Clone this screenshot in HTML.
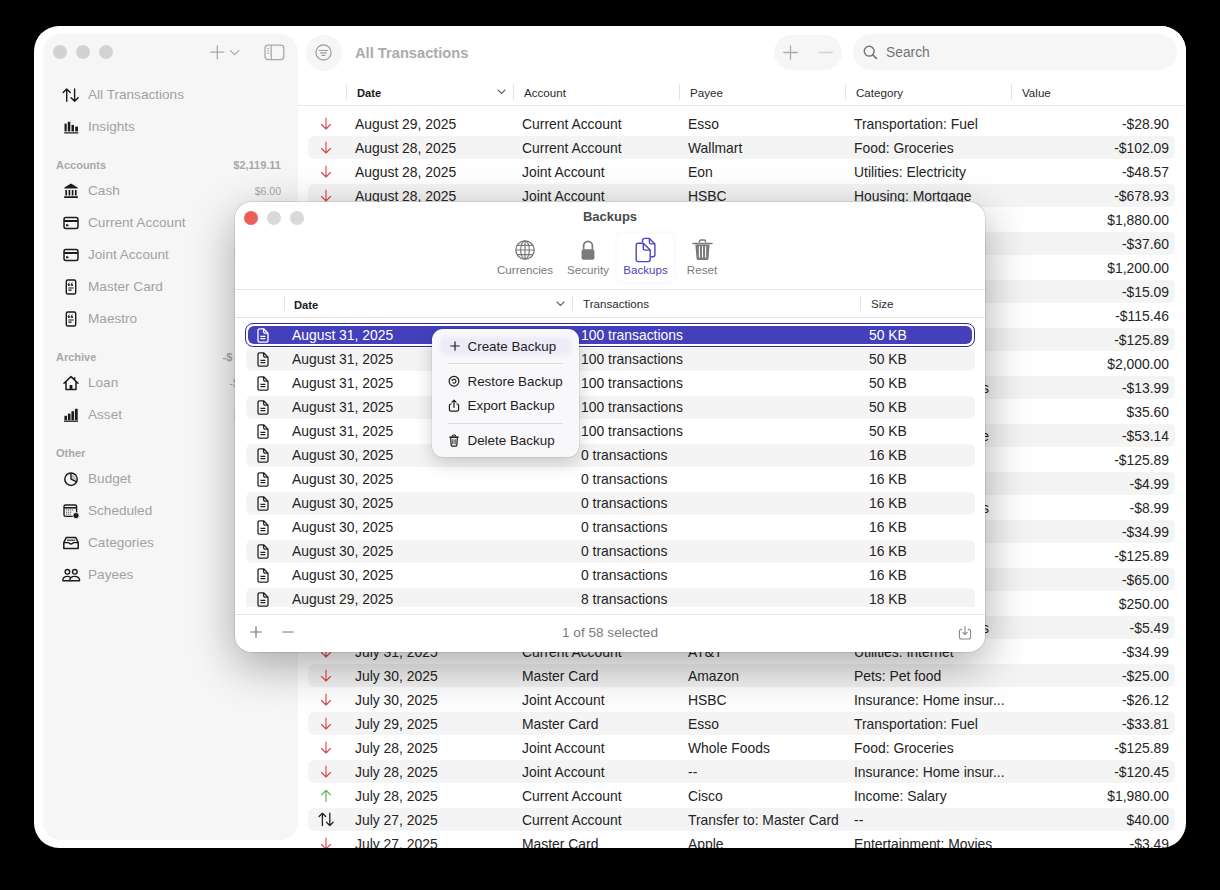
<!DOCTYPE html>
<html><head><meta charset="utf-8"><style>
*{margin:0;padding:0;box-sizing:border-box}
html,body{width:1220px;height:890px;background:#000;overflow:hidden}
body{position:relative;font-family:"Liberation Sans",sans-serif;color:#222}
.abs{position:absolute}
.ic{position:absolute;overflow:visible}
#win{position:absolute;left:34px;top:26px;width:1152px;height:822px;background:#fff;border-radius:25px;overflow:hidden}
#side{position:absolute;left:9px;top:8px;width:255px;height:806px;background:#f6f6f6;border-radius:18px}
.t{position:absolute;white-space:nowrap;line-height:20px;height:20px}
.row{position:absolute;left:274px;width:867px;height:24px;border-radius:6px}
.row.g::before{content:"";position:absolute;left:0;right:0;top:0.5px;bottom:0.5px;background:#f4f4f4;border-radius:6px}
.cell{position:absolute;top:0;line-height:24px;font-size:13.9px;color:#242424;white-space:nowrap;padding-top:0.5px}
.hdr{position:absolute;top:0;line-height:20px;font-size:11.6px;padding-top:1px;color:#2a2a2a;white-space:nowrap}
.vdiv{position:absolute;width:1px;background:#e3e3e3}
.light{position:absolute;width:14px;height:14px;border-radius:50%;background:#d2d2d2}
</style></head><body>
<div id="win">

<div class="row" style="top:85px">
<div class="cell" style="left:47px">August 29, 2025</div>
<div class="cell" style="left:214px">Current Account</div>
<div class="cell" style="left:380px">Esso</div>
<div class="cell" style="left:546px">Transportation: Fuel</div>
<div class="cell" style="right:6px;text-align:right">-$28.90</div>
<svg class="ic" style="left:11px;top:4px" width="14" height="16" viewBox="0 0 14 16"><path d="M7 3.1V14.1M2.5 9.5L7 14L11.5 9.5" fill="none" stroke="#d5504f" stroke-width="1.15" stroke-linecap="round" stroke-linejoin="round"/></svg>
</div>
<div class="row g" style="top:109px">
<div class="cell" style="left:47px">August 28, 2025</div>
<div class="cell" style="left:214px">Current Account</div>
<div class="cell" style="left:380px">Wallmart</div>
<div class="cell" style="left:546px">Food: Groceries</div>
<div class="cell" style="right:6px;text-align:right">-$102.09</div>
<svg class="ic" style="left:11px;top:4px" width="14" height="16" viewBox="0 0 14 16"><path d="M7 3.1V14.1M2.5 9.5L7 14L11.5 9.5" fill="none" stroke="#d5504f" stroke-width="1.15" stroke-linecap="round" stroke-linejoin="round"/></svg>
</div>
<div class="row" style="top:133px">
<div class="cell" style="left:47px">August 28, 2025</div>
<div class="cell" style="left:214px">Joint Account</div>
<div class="cell" style="left:380px">Eon</div>
<div class="cell" style="left:546px">Utilities: Electricity</div>
<div class="cell" style="right:6px;text-align:right">-$48.57</div>
<svg class="ic" style="left:11px;top:4px" width="14" height="16" viewBox="0 0 14 16"><path d="M7 3.1V14.1M2.5 9.5L7 14L11.5 9.5" fill="none" stroke="#d5504f" stroke-width="1.15" stroke-linecap="round" stroke-linejoin="round"/></svg>
</div>
<div class="row g" style="top:157px">
<div class="cell" style="left:47px">August 28, 2025</div>
<div class="cell" style="left:214px">Joint Account</div>
<div class="cell" style="left:380px">HSBC</div>
<div class="cell" style="left:546px">Housing: Mortgage</div>
<div class="cell" style="right:6px;text-align:right">-$678.93</div>
<svg class="ic" style="left:11px;top:4px" width="14" height="16" viewBox="0 0 14 16"><path d="M7 3.1V14.1M2.5 9.5L7 14L11.5 9.5" fill="none" stroke="#d5504f" stroke-width="1.15" stroke-linecap="round" stroke-linejoin="round"/></svg>
</div>
<div class="row" style="top:181px">
<div class="cell" style="left:47px">August 27, 2025</div>
<div class="cell" style="left:214px">Current Account</div>
<div class="cell" style="left:380px">Cisco</div>
<div class="cell" style="left:546px">Income: Salary</div>
<div class="cell" style="right:6px;text-align:right">$1,880.00</div>
<svg class="ic" style="left:11px;top:4px" width="14" height="16" viewBox="0 0 14 16"><path d="M7 14.4V3.4M2.5 7.9L7 3.4L11.5 7.9" fill="none" stroke="#4fb35a" stroke-width="1.15" stroke-linecap="round" stroke-linejoin="round"/></svg>
</div>
<div class="row g" style="top:205px">
<div class="cell" style="left:47px">August 26, 2025</div>
<div class="cell" style="left:214px">Master Card</div>
<div class="cell" style="left:380px">Esso</div>
<div class="cell" style="left:546px">Transportation: Fuel</div>
<div class="cell" style="right:6px;text-align:right">-$37.60</div>
<svg class="ic" style="left:11px;top:4px" width="14" height="16" viewBox="0 0 14 16"><path d="M7 3.1V14.1M2.5 9.5L7 14L11.5 9.5" fill="none" stroke="#d5504f" stroke-width="1.15" stroke-linecap="round" stroke-linejoin="round"/></svg>
</div>
<div class="row" style="top:229px">
<div class="cell" style="left:47px">August 25, 2025</div>
<div class="cell" style="left:214px">Joint Account</div>
<div class="cell" style="left:380px">Cisco</div>
<div class="cell" style="left:546px">Income: Salary</div>
<div class="cell" style="right:6px;text-align:right">$1,200.00</div>
<svg class="ic" style="left:11px;top:4px" width="14" height="16" viewBox="0 0 14 16"><path d="M7 14.4V3.4M2.5 7.9L7 3.4L11.5 7.9" fill="none" stroke="#4fb35a" stroke-width="1.15" stroke-linecap="round" stroke-linejoin="round"/></svg>
</div>
<div class="row g" style="top:253px">
<div class="cell" style="left:47px">August 24, 2025</div>
<div class="cell" style="left:214px">Master Card</div>
<div class="cell" style="left:380px">Apple</div>
<div class="cell" style="left:546px">Entertainment</div>
<div class="cell" style="right:6px;text-align:right">-$15.09</div>
<svg class="ic" style="left:11px;top:4px" width="14" height="16" viewBox="0 0 14 16"><path d="M7 3.1V14.1M2.5 9.5L7 14L11.5 9.5" fill="none" stroke="#d5504f" stroke-width="1.15" stroke-linecap="round" stroke-linejoin="round"/></svg>
</div>
<div class="row" style="top:277px">
<div class="cell" style="left:47px">August 22, 2025</div>
<div class="cell" style="left:214px">Joint Account</div>
<div class="cell" style="left:380px">Whole Foods</div>
<div class="cell" style="left:546px">Food: Groceries</div>
<div class="cell" style="right:6px;text-align:right">-$115.46</div>
<svg class="ic" style="left:11px;top:4px" width="14" height="16" viewBox="0 0 14 16"><path d="M7 3.1V14.1M2.5 9.5L7 14L11.5 9.5" fill="none" stroke="#d5504f" stroke-width="1.15" stroke-linecap="round" stroke-linejoin="round"/></svg>
</div>
<div class="row g" style="top:301px">
<div class="cell" style="left:47px">August 20, 2025</div>
<div class="cell" style="left:214px">Joint Account</div>
<div class="cell" style="left:380px">Wallmart</div>
<div class="cell" style="left:546px">Food: Groceries</div>
<div class="cell" style="right:6px;text-align:right">-$125.89</div>
<svg class="ic" style="left:11px;top:4px" width="14" height="16" viewBox="0 0 14 16"><path d="M7 3.1V14.1M2.5 9.5L7 14L11.5 9.5" fill="none" stroke="#d5504f" stroke-width="1.15" stroke-linecap="round" stroke-linejoin="round"/></svg>
</div>
<div class="row" style="top:325px">
<div class="cell" style="left:47px">August 18, 2025</div>
<div class="cell" style="left:214px">Current Account</div>
<div class="cell" style="left:380px">Cisco</div>
<div class="cell" style="left:546px">Income: Salary</div>
<div class="cell" style="right:6px;text-align:right">$2,000.00</div>
<svg class="ic" style="left:11px;top:4px" width="14" height="16" viewBox="0 0 14 16"><path d="M7 14.4V3.4M2.5 7.9L7 3.4L11.5 7.9" fill="none" stroke="#4fb35a" stroke-width="1.15" stroke-linecap="round" stroke-linejoin="round"/></svg>
</div>
<div class="row g" style="top:349px">
<div class="cell" style="left:47px">August 15, 2025</div>
<div class="cell" style="left:214px">Master Card</div>
<div class="cell" style="left:380px">Netflix</div>
<div class="cell" style="right:186px;text-align:right">Entertainment: Games</div>
<div class="cell" style="right:6px;text-align:right">-$13.99</div>
<svg class="ic" style="left:11px;top:4px" width="14" height="16" viewBox="0 0 14 16"><path d="M7 3.1V14.1M2.5 9.5L7 14L11.5 9.5" fill="none" stroke="#d5504f" stroke-width="1.15" stroke-linecap="round" stroke-linejoin="round"/></svg>
</div>
<div class="row" style="top:373px">
<div class="cell" style="left:47px">August 14, 2025</div>
<div class="cell" style="left:214px">Current Account</div>
<div class="cell" style="left:380px">Refund</div>
<div class="cell" style="left:546px">Income: Refunds</div>
<div class="cell" style="right:6px;text-align:right">$35.60</div>
<svg class="ic" style="left:11px;top:4px" width="14" height="16" viewBox="0 0 14 16"><path d="M7 14.4V3.4M2.5 7.9L7 3.4L11.5 7.9" fill="none" stroke="#4fb35a" stroke-width="1.15" stroke-linecap="round" stroke-linejoin="round"/></svg>
</div>
<div class="row g" style="top:397px">
<div class="cell" style="left:47px">August 12, 2025</div>
<div class="cell" style="left:214px">Joint Account</div>
<div class="cell" style="left:380px">Vodafone</div>
<div class="cell" style="right:186px;text-align:right">Utilities: Mobile phone</div>
<div class="cell" style="right:6px;text-align:right">-$53.14</div>
<svg class="ic" style="left:11px;top:4px" width="14" height="16" viewBox="0 0 14 16"><path d="M7 3.1V14.1M2.5 9.5L7 14L11.5 9.5" fill="none" stroke="#d5504f" stroke-width="1.15" stroke-linecap="round" stroke-linejoin="round"/></svg>
</div>
<div class="row" style="top:421px">
<div class="cell" style="left:47px">August 10, 2025</div>
<div class="cell" style="left:214px">Joint Account</div>
<div class="cell" style="left:380px">Whole Foods</div>
<div class="cell" style="left:546px">Food: Groceries</div>
<div class="cell" style="right:6px;text-align:right">-$125.89</div>
<svg class="ic" style="left:11px;top:4px" width="14" height="16" viewBox="0 0 14 16"><path d="M7 3.1V14.1M2.5 9.5L7 14L11.5 9.5" fill="none" stroke="#d5504f" stroke-width="1.15" stroke-linecap="round" stroke-linejoin="round"/></svg>
</div>
<div class="row g" style="top:445px">
<div class="cell" style="left:47px">August 9, 2025</div>
<div class="cell" style="left:214px">Master Card</div>
<div class="cell" style="left:380px">Spotify</div>
<div class="cell" style="left:546px">Entertainment: Music</div>
<div class="cell" style="right:6px;text-align:right">-$4.99</div>
<svg class="ic" style="left:11px;top:4px" width="14" height="16" viewBox="0 0 14 16"><path d="M7 3.1V14.1M2.5 9.5L7 14L11.5 9.5" fill="none" stroke="#d5504f" stroke-width="1.15" stroke-linecap="round" stroke-linejoin="round"/></svg>
</div>
<div class="row" style="top:469px">
<div class="cell" style="left:47px">August 8, 2025</div>
<div class="cell" style="left:214px">Master Card</div>
<div class="cell" style="left:380px">Apple</div>
<div class="cell" style="right:186px;text-align:right">Entertainment: Games</div>
<div class="cell" style="right:6px;text-align:right">-$8.99</div>
<svg class="ic" style="left:11px;top:4px" width="14" height="16" viewBox="0 0 14 16"><path d="M7 3.1V14.1M2.5 9.5L7 14L11.5 9.5" fill="none" stroke="#d5504f" stroke-width="1.15" stroke-linecap="round" stroke-linejoin="round"/></svg>
</div>
<div class="row g" style="top:493px">
<div class="cell" style="left:47px">August 6, 2025</div>
<div class="cell" style="left:214px">Current Account</div>
<div class="cell" style="left:380px">AT&amp;T</div>
<div class="cell" style="left:546px">Utilities: Internet</div>
<div class="cell" style="right:6px;text-align:right">-$34.99</div>
<svg class="ic" style="left:11px;top:4px" width="14" height="16" viewBox="0 0 14 16"><path d="M7 3.1V14.1M2.5 9.5L7 14L11.5 9.5" fill="none" stroke="#d5504f" stroke-width="1.15" stroke-linecap="round" stroke-linejoin="round"/></svg>
</div>
<div class="row" style="top:517px">
<div class="cell" style="left:47px">August 4, 2025</div>
<div class="cell" style="left:214px">Joint Account</div>
<div class="cell" style="left:380px">Wallmart</div>
<div class="cell" style="left:546px">Food: Groceries</div>
<div class="cell" style="right:6px;text-align:right">-$125.89</div>
<svg class="ic" style="left:11px;top:4px" width="14" height="16" viewBox="0 0 14 16"><path d="M7 3.1V14.1M2.5 9.5L7 14L11.5 9.5" fill="none" stroke="#d5504f" stroke-width="1.15" stroke-linecap="round" stroke-linejoin="round"/></svg>
</div>
<div class="row g" style="top:541px">
<div class="cell" style="left:47px">August 3, 2025</div>
<div class="cell" style="left:214px">Master Card</div>
<div class="cell" style="left:380px">Esso</div>
<div class="cell" style="left:546px">Transportation: Fuel</div>
<div class="cell" style="right:6px;text-align:right">-$65.00</div>
<svg class="ic" style="left:11px;top:4px" width="14" height="16" viewBox="0 0 14 16"><path d="M7 3.1V14.1M2.5 9.5L7 14L11.5 9.5" fill="none" stroke="#d5504f" stroke-width="1.15" stroke-linecap="round" stroke-linejoin="round"/></svg>
</div>
<div class="row" style="top:565px">
<div class="cell" style="left:47px">August 2, 2025</div>
<div class="cell" style="left:214px">Current Account</div>
<div class="cell" style="left:380px">Cisco</div>
<div class="cell" style="left:546px">Income: Bonus</div>
<div class="cell" style="right:6px;text-align:right">$250.00</div>
<svg class="ic" style="left:11px;top:4px" width="14" height="16" viewBox="0 0 14 16"><path d="M7 14.4V3.4M2.5 7.9L7 3.4L11.5 7.9" fill="none" stroke="#4fb35a" stroke-width="1.15" stroke-linecap="round" stroke-linejoin="round"/></svg>
</div>
<div class="row g" style="top:589px">
<div class="cell" style="left:47px">August 1, 2025</div>
<div class="cell" style="left:214px">Master Card</div>
<div class="cell" style="left:380px">Apple</div>
<div class="cell" style="right:186px;text-align:right">Entertainment: Games</div>
<div class="cell" style="right:6px;text-align:right">-$5.49</div>
<svg class="ic" style="left:11px;top:4px" width="14" height="16" viewBox="0 0 14 16"><path d="M7 3.1V14.1M2.5 9.5L7 14L11.5 9.5" fill="none" stroke="#d5504f" stroke-width="1.15" stroke-linecap="round" stroke-linejoin="round"/></svg>
</div>
<div class="row" style="top:613px">
<div class="cell" style="left:47px">July 31, 2025</div>
<div class="cell" style="left:214px">Current Account</div>
<div class="cell" style="left:380px">AT&amp;T</div>
<div class="cell" style="left:546px">Utilities: Internet</div>
<div class="cell" style="right:6px;text-align:right">-$34.99</div>
<svg class="ic" style="left:11px;top:4px" width="14" height="16" viewBox="0 0 14 16"><path d="M7 3.1V14.1M2.5 9.5L7 14L11.5 9.5" fill="none" stroke="#d5504f" stroke-width="1.15" stroke-linecap="round" stroke-linejoin="round"/></svg>
</div>
<div class="row g" style="top:637px">
<div class="cell" style="left:47px">July 30, 2025</div>
<div class="cell" style="left:214px">Master Card</div>
<div class="cell" style="left:380px">Amazon</div>
<div class="cell" style="left:546px">Pets: Pet food</div>
<div class="cell" style="right:6px;text-align:right">-$25.00</div>
<svg class="ic" style="left:11px;top:4px" width="14" height="16" viewBox="0 0 14 16"><path d="M7 3.1V14.1M2.5 9.5L7 14L11.5 9.5" fill="none" stroke="#d5504f" stroke-width="1.15" stroke-linecap="round" stroke-linejoin="round"/></svg>
</div>
<div class="row" style="top:661px">
<div class="cell" style="left:47px">July 30, 2025</div>
<div class="cell" style="left:214px">Joint Account</div>
<div class="cell" style="left:380px">HSBC</div>
<div class="cell" style="left:546px">Insurance: Home insur...</div>
<div class="cell" style="right:6px;text-align:right">-$26.12</div>
<svg class="ic" style="left:11px;top:4px" width="14" height="16" viewBox="0 0 14 16"><path d="M7 3.1V14.1M2.5 9.5L7 14L11.5 9.5" fill="none" stroke="#d5504f" stroke-width="1.15" stroke-linecap="round" stroke-linejoin="round"/></svg>
</div>
<div class="row g" style="top:685px">
<div class="cell" style="left:47px">July 29, 2025</div>
<div class="cell" style="left:214px">Master Card</div>
<div class="cell" style="left:380px">Esso</div>
<div class="cell" style="left:546px">Transportation: Fuel</div>
<div class="cell" style="right:6px;text-align:right">-$33.81</div>
<svg class="ic" style="left:11px;top:4px" width="14" height="16" viewBox="0 0 14 16"><path d="M7 3.1V14.1M2.5 9.5L7 14L11.5 9.5" fill="none" stroke="#d5504f" stroke-width="1.15" stroke-linecap="round" stroke-linejoin="round"/></svg>
</div>
<div class="row" style="top:709px">
<div class="cell" style="left:47px">July 28, 2025</div>
<div class="cell" style="left:214px">Joint Account</div>
<div class="cell" style="left:380px">Whole Foods</div>
<div class="cell" style="left:546px">Food: Groceries</div>
<div class="cell" style="right:6px;text-align:right">-$125.89</div>
<svg class="ic" style="left:11px;top:4px" width="14" height="16" viewBox="0 0 14 16"><path d="M7 3.1V14.1M2.5 9.5L7 14L11.5 9.5" fill="none" stroke="#d5504f" stroke-width="1.15" stroke-linecap="round" stroke-linejoin="round"/></svg>
</div>
<div class="row g" style="top:733px">
<div class="cell" style="left:47px">July 28, 2025</div>
<div class="cell" style="left:214px">Joint Account</div>
<div class="cell" style="left:380px">--</div>
<div class="cell" style="left:546px">Insurance: Home insur...</div>
<div class="cell" style="right:6px;text-align:right">-$120.45</div>
<svg class="ic" style="left:11px;top:4px" width="14" height="16" viewBox="0 0 14 16"><path d="M7 3.1V14.1M2.5 9.5L7 14L11.5 9.5" fill="none" stroke="#d5504f" stroke-width="1.15" stroke-linecap="round" stroke-linejoin="round"/></svg>
</div>
<div class="row" style="top:757px">
<div class="cell" style="left:47px">July 28, 2025</div>
<div class="cell" style="left:214px">Current Account</div>
<div class="cell" style="left:380px">Cisco</div>
<div class="cell" style="left:546px">Income: Salary</div>
<div class="cell" style="right:6px;text-align:right">$1,980.00</div>
<svg class="ic" style="left:11px;top:4px" width="14" height="16" viewBox="0 0 14 16"><path d="M7 14.4V3.4M2.5 7.9L7 3.4L11.5 7.9" fill="none" stroke="#4fb35a" stroke-width="1.15" stroke-linecap="round" stroke-linejoin="round"/></svg>
</div>
<div class="row g" style="top:781px">
<div class="cell" style="left:47px">July 27, 2025</div>
<div class="cell" style="left:214px">Current Account</div>
<div class="cell" style="left:380px">Transfer to: Master Card</div>
<div class="cell" style="left:546px">--</div>
<div class="cell" style="right:6px;text-align:right">$40.00</div>
<svg class="ic" style="left:9px;top:4px" width="18" height="16" viewBox="0 0 18 16"><path d="M5.4 14.6V2.2M2.1 5.5L5.4 2.2L8.7 5.5M12.8 2.2V14.6M9.5 11.3L12.8 14.6L16.1 11.3" fill="none" stroke="#222" stroke-width="1.3" stroke-linecap="round" stroke-linejoin="round"/></svg>
</div>
<div class="row" style="top:805px">
<div class="cell" style="left:47px">July 27, 2025</div>
<div class="cell" style="left:214px">Master Card</div>
<div class="cell" style="left:380px">Apple</div>
<div class="cell" style="left:546px">Entertainment: Movies</div>
<div class="cell" style="right:6px;text-align:right">-$3.49</div>
<svg class="ic" style="left:11px;top:4px" width="14" height="16" viewBox="0 0 14 16"><path d="M7 3.1V14.1M2.5 9.5L7 14L11.5 9.5" fill="none" stroke="#d5504f" stroke-width="1.15" stroke-linecap="round" stroke-linejoin="round"/></svg>
</div>
<div class="abs" style="left:264px;top:54px;width:900px;height:26px;background:#fff"></div>
<div class="abs" style="left:264px;top:79px;width:900px;height:1px;background:#e6e6e6"></div>
<div class="vdiv" style="left:312px;top:58px;height:16px"></div>
<div class="vdiv" style="left:479px;top:58px;height:16px"></div>
<div class="vdiv" style="left:645px;top:58px;height:16px"></div>
<div class="vdiv" style="left:811px;top:58px;height:16px"></div>
<div class="vdiv" style="left:977px;top:58px;height:16px"></div>
<div class="hdr" style="left:323px;top:56px;font-weight:bold;font-size:11.2px;color:#1a1a1a">Date</div>
<svg class="ic" style="left:463px;top:63px" width="9" height="6" viewBox="0 0 9 6"><path d="M1 1L4.5 4.5L8 1" fill="none" stroke="#666" stroke-width="1.1" stroke-linecap="round" stroke-linejoin="round"/></svg>
<div class="hdr" style="left:490px;top:56px">Account</div>
<div class="hdr" style="left:656px;top:56px">Payee</div>
<div class="hdr" style="left:822px;top:56px">Category</div>
<div class="hdr" style="left:988px;top:56px">Value</div>
<div class="abs" style="left:264px;top:0;width:900px;height:54px;background:#fff"></div>
<div class="abs" style="left:272px;top:9px;width:36px;height:36px;border-radius:50%;background:#f6f6f6"></div>
<svg class="ic" style="left:281px;top:18px" width="17" height="17" viewBox="0 0 17 17"><circle cx="8.5" cy="8.5" r="7.6" fill="none" stroke="#9a9a9a" stroke-width="1.2"/><path d="M4.3 6.5H12.7M5.6 8.9H11.4M7 11.3H10" stroke="#9a9a9a" stroke-width="1.2" stroke-linecap="round"/></svg>
<div class="t" style="left:321px;top:17px;font-size:14.7px;font-weight:bold;color:#ababab">All Transactions</div>
<div class="abs" style="left:740px;top:9px;width:68px;height:35px;border-radius:18px;background:#f6f6f6"></div>
<svg class="ic" style="left:749px;top:19px" width="15" height="15" viewBox="0 0 15 15"><path d="M7.5 0.8V14.2M0.8 7.5H14.2" stroke="#ababab" stroke-width="1.3" stroke-linecap="round"/></svg>
<svg class="ic" style="left:784px;top:19px" width="15" height="15" viewBox="0 0 15 15"><path d="M0.8 7.5H14.2" stroke="#d2d2d2" stroke-width="1.3" stroke-linecap="round"/></svg>
<div class="abs" style="left:819px;top:8px;width:324px;height:36px;border-radius:18px;background:#f6f6f6"></div>
<svg class="ic" style="left:829px;top:19px" width="15" height="15" viewBox="0 0 15 15"><circle cx="6.2" cy="6.2" r="4.9" fill="none" stroke="#777" stroke-width="1.5"/><path d="M9.8 9.8L13.4 13.4" stroke="#777" stroke-width="1.7" stroke-linecap="round"/></svg>
<div class="t" style="left:852px;top:17px;font-size:13.8px;color:#737373">Search</div>
<div id="side">
<div class="light" style="left:10px;top:11px"></div>
<div class="light" style="left:33px;top:11px"></div>
<div class="light" style="left:56px;top:11px"></div>
<svg class="ic" style="left:167px;top:11px" width="32" height="15" viewBox="0 0 32 15"><path d="M7.3 0.8V13.8M0.8 7.2H13.8" stroke="#a9a9a9" stroke-width="1.3" stroke-linecap="round"/><path d="M20.4 5.6L24.6 9.6L28.8 5.6" fill="none" stroke="#a9a9a9" stroke-width="1.3" stroke-linecap="round" stroke-linejoin="round"/></svg>
<svg class="ic" style="left:221px;top:10px" width="21" height="17" viewBox="0 0 21 17"><rect x="1" y="1.2" width="18.8" height="14.4" rx="3" fill="none" stroke="#a9a9a9" stroke-width="1.3"/><path d="M7.2 1.2V15.6" stroke="#a9a9a9" stroke-width="1.3"/><path d="M3.2 4.6H5.2M3.2 7H5.2M3.2 9.4H5.2" stroke="#a9a9a9" stroke-width="1"/></svg>
<svg class="ic" style="left:18px;top:50.5px" width="20" height="20" viewBox="0 0 20 20"><path d="M5.7 16.3V4M2.2 7.5L5.7 4L9.2 7.5M13.6 4V16.3M10.1 12.8L13.6 16.3L17.1 12.8" fill="none" stroke="#1c1c1c" stroke-width="1.45" stroke-linecap="round" stroke-linejoin="round"/></svg>
<div class="t" style="left:45px;top:50.5px;font-size:13.6px;color:#a2a2a2;padding-top:0px">All Transactions</div>
<svg class="ic" style="left:18px;top:82.5px" width="20" height="20" viewBox="0 0 20 20"><path d="M3.2 15.9H17.2" stroke="#1c1c1c" stroke-width="1.3"/><rect x="3.5" y="6.6" width="2.2" height="7.8" fill="#1c1c1c"/><rect x="6.8" y="4.8" width="2.5" height="9.6" fill="#1c1c1c"/><rect x="10.5" y="7.9" width="2.5" height="6.5" fill="#1c1c1c"/><rect x="14.2" y="9.6" width="2.8" height="4.8" fill="#1c1c1c"/></svg>
<div class="t" style="left:45px;top:82.5px;font-size:13.6px;color:#a2a2a2;padding-top:0px">Insights</div>
<svg class="ic" style="left:18px;top:146.5px" width="20" height="20" viewBox="0 0 20 20"><path d="M10 2.6L3.4 6.6V7.6H16.6V6.6Z" fill="#1c1c1c"/><path d="M5.2 9V14.6M8.4 9V14.6M11.6 9V14.6M14.8 9V14.6" stroke="#1c1c1c" stroke-width="1.7"/><path d="M3.2 16.2H16.8" stroke="#1c1c1c" stroke-width="1.8"/></svg>
<div class="t" style="left:45px;top:146.5px;font-size:13.6px;color:#a2a2a2;padding-top:0px">Cash</div>
<svg class="ic" style="left:18px;top:178.5px" width="20" height="20" viewBox="0 0 20 20"><rect x="3" y="4.6" width="14" height="10.8" rx="1.8" fill="none" stroke="#1c1c1c" stroke-width="1.5"/><path d="M3 8H17" stroke="#1c1c1c" stroke-width="2"/><rect x="5" y="11.4" width="2.4" height="1.8" fill="#1c1c1c"/></svg>
<div class="t" style="left:45px;top:178.5px;font-size:13.6px;color:#a2a2a2;padding-top:0px">Current Account</div>
<svg class="ic" style="left:18px;top:210.5px" width="20" height="20" viewBox="0 0 20 20"><rect x="3" y="4.6" width="14" height="10.8" rx="1.8" fill="none" stroke="#1c1c1c" stroke-width="1.5"/><path d="M3 8H17" stroke="#1c1c1c" stroke-width="2"/><rect x="5" y="11.4" width="2.4" height="1.8" fill="#1c1c1c"/></svg>
<div class="t" style="left:45px;top:210.5px;font-size:13.6px;color:#a2a2a2;padding-top:0px">Joint Account</div>
<svg class="ic" style="left:18px;top:242.5px" width="20" height="20" viewBox="0 0 20 20"><rect x="5.3" y="3" width="9.4" height="14" rx="1.6" fill="none" stroke="#1c1c1c" stroke-width="1.4"/><circle cx="8" cy="8" r="1.1" fill="#1c1c1c"/><circle cx="11" cy="8" r="1.1" fill="#1c1c1c"/><path d="M7.1 7.9Q7.1 6.1 8.6 5.6M10.1 7.9Q10.1 6.1 11.6 5.6" fill="none" stroke="#1c1c1c" stroke-width="0.9"/><path d="M7.4 11H12.6M7.4 13.2H10.6" stroke="#1c1c1c" stroke-width="1.2"/></svg>
<div class="t" style="left:45px;top:242.5px;font-size:13.6px;color:#a2a2a2;padding-top:0px">Master Card</div>
<svg class="ic" style="left:18px;top:274.5px" width="20" height="20" viewBox="0 0 20 20"><rect x="5.3" y="3" width="9.4" height="14" rx="1.6" fill="none" stroke="#1c1c1c" stroke-width="1.4"/><circle cx="8" cy="8" r="1.1" fill="#1c1c1c"/><circle cx="11" cy="8" r="1.1" fill="#1c1c1c"/><path d="M7.1 7.9Q7.1 6.1 8.6 5.6M10.1 7.9Q10.1 6.1 11.6 5.6" fill="none" stroke="#1c1c1c" stroke-width="0.9"/><path d="M7.4 11H12.6M7.4 13.2H10.6" stroke="#1c1c1c" stroke-width="1.2"/></svg>
<div class="t" style="left:45px;top:274.5px;font-size:13.6px;color:#a2a2a2;padding-top:0px">Maestro</div>
<svg class="ic" style="left:18px;top:338.5px" width="20" height="20" viewBox="0 0 20 20"><path d="M3 10.2L10 3.6L17 10.2M5 8.6V16.6H15V8.6" fill="none" stroke="#1c1c1c" stroke-width="1.5" stroke-linejoin="round" stroke-linecap="round"/><rect x="8.6" y="12" width="2.8" height="4.6" fill="#1c1c1c"/><path d="M13.6 4.2V6.8" stroke="#1c1c1c" stroke-width="1.5"/></svg>
<div class="t" style="left:45px;top:338.5px;font-size:13.6px;color:#a2a2a2;padding-top:0px">Loan</div>
<svg class="ic" style="left:18px;top:370.5px" width="20" height="20" viewBox="0 0 20 20"><path d="M3 16.2H17" stroke="#1c1c1c" stroke-width="1.3"/><rect x="3.4" y="10.8" width="2.6" height="4.4" fill="#1c1c1c"/><rect x="6.9" y="8.6" width="2.6" height="6.6" fill="#1c1c1c"/><rect x="10.4" y="6.2" width="2.6" height="9" fill="#1c1c1c"/><rect x="13.9" y="3.8" width="2.8" height="11.4" fill="#1c1c1c"/></svg>
<div class="t" style="left:45px;top:370.5px;font-size:13.6px;color:#a2a2a2;padding-top:0px">Asset</div>
<svg class="ic" style="left:18px;top:434.5px" width="20" height="20" viewBox="0 0 20 20"><circle cx="10" cy="10.2" r="6.2" fill="none" stroke="#1c1c1c" stroke-width="1.5"/><path d="M10 4V10.2L15.2 12.6" fill="none" stroke="#1c1c1c" stroke-width="1.4" stroke-linejoin="round"/><path d="M10.6 5.2Q14.6 6.4 15 11.4L10.6 9.6Z" fill="#1c1c1c" opacity="0.25"/></svg>
<div class="t" style="left:45px;top:434.5px;font-size:13.6px;color:#a2a2a2;padding-top:0px">Budget</div>
<svg class="ic" style="left:18px;top:466.5px" width="20" height="20" viewBox="0 0 20 20"><rect x="3" y="4" width="12.6" height="11.4" rx="1.6" fill="none" stroke="#1c1c1c" stroke-width="1.4"/><path d="M3 6.8H15.6" stroke="#1c1c1c" stroke-width="1.6"/><path d="M5.2 9H13.4M5.2 11.2H11M5.2 13.2H10" stroke="#1c1c1c" stroke-width="0.9" stroke-dasharray="1 1"/><circle cx="15" cy="14.6" r="3.1" fill="#1c1c1c" stroke="#f6f6f6" stroke-width="0.8"/></svg>
<div class="t" style="left:45px;top:466.5px;font-size:13.6px;color:#a2a2a2;padding-top:0px">Scheduled</div>
<svg class="ic" style="left:18px;top:498.5px" width="20" height="20" viewBox="0 0 20 20"><path d="M2.8 9.6L5.2 4.6H14.8L17.2 9.6V15.6H2.8Z" fill="none" stroke="#1c1c1c" stroke-width="1.5" stroke-linejoin="round"/><path d="M2.8 9.6H7.2Q10 12.4 12.8 9.6H17.2" fill="none" stroke="#1c1c1c" stroke-width="1.4"/><path d="M6 7.2H14" stroke="#1c1c1c" stroke-width="1.1"/></svg>
<div class="t" style="left:45px;top:498.5px;font-size:13.6px;color:#a2a2a2;padding-top:0px">Categories</div>
<svg class="ic" style="left:18px;top:530.5px" width="20" height="20" viewBox="0 0 20 20"><circle cx="6.4" cy="6.8" r="2.3" fill="none" stroke="#1c1c1c" stroke-width="1.4"/><circle cx="13.8" cy="6.8" r="2.3" fill="none" stroke="#1c1c1c" stroke-width="1.4"/><path d="M1.8 15.8Q1.8 11.4 6.4 11.4Q8.6 11.4 9.6 12.6M1.8 15.8H8.8" fill="none" stroke="#1c1c1c" stroke-width="1.4" stroke-linejoin="round" stroke-linecap="round"/><path d="M8.8 15.8Q8.8 11.4 13.8 11.4Q18.6 11.4 18.6 15.8Z" fill="none" stroke="#1c1c1c" stroke-width="1.4" stroke-linejoin="round"/></svg>
<div class="t" style="left:45px;top:530.5px;font-size:13.6px;color:#a2a2a2;padding-top:0px">Payees</div>
<div class="t" style="left:13px;top:120.5px;font-size:11px;font-weight:bold;color:#a8a8a8">Accounts</div>
<div class="t" style="left:13px;top:312.5px;font-size:11px;font-weight:bold;color:#a8a8a8">Archive</div>
<div class="t" style="left:13px;top:408.5px;font-size:11px;font-weight:bold;color:#a8a8a8">Other</div>
<div class="t" style="right:17px;top:120.5px;font-size:11px;font-weight:bold;color:#a8a8a8">$2,119.11</div>
<div class="t" style="right:17px;top:146.5px;font-size:10.5px;color:#a8a8a8">$6.00</div>
<div class="t" style="right:17px;top:178.5px;font-size:10.5px;color:#a8a8a8">$500.00</div>
<div class="t" style="right:17px;top:210.5px;font-size:10.5px;color:#a8a8a8">$1,200.00</div>
<div class="t" style="right:17px;top:242.5px;font-size:10.5px;color:#a8a8a8">$300.00</div>
<div class="t" style="right:17px;top:274.5px;font-size:10.5px;color:#a8a8a8">$113.11</div>
<div class="t" style="left:179.6px;top:312.5px;font-size:11px;font-weight:bold;color:#a8a8a8">-$</div>
<div class="t" style="left:186.4px;top:338.5px;font-size:10.5px;color:#a8a8a8">-$</div>
<div class="t" style="right:17px;top:370.5px;font-size:10.5px;color:#a8a8a8">$3,000.00</div>
</div>
</div>
<div id="dlg" style="position:absolute;left:235px;top:202px;width:750px;height:450px;background:#fff;border-radius:16px;box-shadow:0 14px 46px rgba(0,0,0,0.33),0 0 0 0.5px rgba(0,0,0,0.18);overflow:hidden">
<div class="light" style="left:9px;top:9px;background:#ec5f58"></div>
<div class="light" style="left:32px;top:9px;background:#d9d9d9"></div>
<div class="light" style="left:55px;top:9px;background:#d9d9d9"></div>
<div class="t" style="left:0;width:750px;text-align:center;top:5px;font-size:13px;font-weight:bold;color:#4a4a4a">Backups</div>
<div class="abs" style="left:382px;top:31px;width:57px;height:49px;border-radius:8px;background:#fff;box-shadow:0 0 6px rgba(0,0,0,0.05)"></div>
<svg class="ic" style="left:280px;top:38px" width="20" height="20" viewBox="0 0 20 20"><circle cx="10" cy="10" r="9.2" fill="none" stroke="#7a7a7a" stroke-width="1.3"/><ellipse cx="10" cy="10" rx="4.3" ry="9.2" fill="none" stroke="#7a7a7a" stroke-width="1.2"/><path d="M10 0.8V19.2M0.8 10H19.2M2.2 5.4H17.8M2.2 14.6H17.8" stroke="#7a7a7a" stroke-width="1.2"/></svg>
<svg class="ic" style="left:346px;top:38px" width="14" height="21" viewBox="0 0 14 21"><path d="M2.6 9.6V5.8A4.4 4.4 0 0 1 11.4 5.8V9.6" fill="none" stroke="#7a7a7a" stroke-width="1.7"/><rect x="0.6" y="9.2" width="12.8" height="10.6" rx="1.8" fill="#7a7a7a"/></svg>
<svg class="ic" style="left:400px;top:35px" width="22" height="26" viewBox="0 0 22 26"><path d="M7.5 5.2V3.4A2 2 0 0 1 9.5 1.4H14.4L19.9 6.9V17.8A2 2 0 0 1 17.9 19.8H15.6" fill="none" stroke="#4b45c1" stroke-width="1.4" stroke-linejoin="round"/><path d="M14.4 1.4V5.2A1.7 1.7 0 0 0 16.1 6.9H19.9" fill="none" stroke="#4b45c1" stroke-width="1.4" stroke-linejoin="round"/><path d="M1.2 8.2A2 2 0 0 1 3.2 6.2H8.3L15.2 13.1V22.6A2 2 0 0 1 13.2 24.6H3.2A2 2 0 0 1 1.2 22.6Z" fill="#fff" stroke="#4b45c1" stroke-width="1.4" stroke-linejoin="round"/><path d="M8.3 6.2V11.4A1.7 1.7 0 0 0 10 13.1H15.2" fill="none" stroke="#4b45c1" stroke-width="1.4" stroke-linejoin="round"/></svg>
<svg class="ic" style="left:457px;top:37px" width="21" height="22" viewBox="0 0 21 22"><path d="M7.4 3.6V2.6A1.6 1.6 0 0 1 9 1H12A1.6 1.6 0 0 1 13.6 2.6V3.6" fill="none" stroke="#7a7a7a" stroke-width="1.5"/><path d="M1 4.4H20" stroke="#7a7a7a" stroke-width="1.5" stroke-linecap="round"/><path d="M3.4 5.4H17.6L16.5 19.4A1.8 1.8 0 0 1 14.7 21H6.3A1.8 1.8 0 0 1 4.5 19.4Z" fill="#7a7a7a"/><path d="M7.4 7.6V18.2M10.5 7.6V18.2M13.6 7.6V18.2" stroke="#fff" stroke-width="1.1" stroke-linecap="round"/></svg>
<div class="t" style="left:250px;width:80px;text-align:center;top:58px;font-size:11.6px;color:#7a7a7a">Currencies</div>
<div class="t" style="left:313px;width:80px;text-align:center;top:58px;font-size:11.6px;color:#7a7a7a">Security</div>
<div class="t" style="left:370.5px;width:80px;text-align:center;top:58px;font-size:11.6px;color:#4b47b8">Backups</div>
<div class="t" style="left:427px;width:80px;text-align:center;top:58px;font-size:11.6px;color:#7a7a7a">Reset</div>
<div class="abs" style="left:0;top:87px;width:750px;height:1px;background:#e4e4e4"></div>
<div class="abs" style="left:0;top:115px;width:750px;height:1px;background:#e4e4e4"></div>
<div class="vdiv" style="left:48.5px;top:94px;height:15px"></div>
<div class="vdiv" style="left:337px;top:94px;height:15px"></div>
<div class="vdiv" style="left:625px;top:94px;height:15px"></div>
<div class="hdr" style="left:59px;top:91.5px;font-weight:bold;font-size:11.2px;color:#1a1a1a">Date</div>
<svg class="ic" style="left:321px;top:99px" width="9" height="6" viewBox="0 0 9 6"><path d="M1 1L4.5 4.5L8 1" fill="none" stroke="#666" stroke-width="1.1" stroke-linecap="round" stroke-linejoin="round"/></svg>
<div class="hdr" style="left:348px;top:91px">Transactions</div>
<div class="hdr" style="left:636px;top:91px">Size</div>
<div class="abs" style="left:0;top:116px;width:750px;height:289px;overflow:hidden">
<div class="abs" style="left:10px;top:5px;width:730px;height:24px;border-radius:8px;border:1.6px solid #2e2a9c;background:#fff"></div>
<div class="abs" style="left:13px;top:8px;width:724px;height:18px;border-radius:6px;background:#4440bb"></div>
<svg class="ic" style="left:22px;top:9.5px" width="12" height="15" viewBox="0 0 12 15"><path d="M1 2.6A1.8 1.8 0 0 1 2.8 0.8H6.6L11 5.2V12.4A1.8 1.8 0 0 1 9.2 14.2H2.8A1.8 1.8 0 0 1 1 12.4Z" fill="none" stroke="#fff" stroke-width="1.3" stroke-linejoin="round"/><path d="M6.6 0.8V3.8A1.4 1.4 0 0 0 8 5.2H11" fill="none" stroke="#fff" stroke-width="1.3" stroke-linejoin="round"/><path d="M3.4 8.4H8.4M3.4 10.6H8.4" stroke="#fff" stroke-width="1.2"/></svg>
<div class="cell" style="left:57px;top:4px;color:#fff">August 31, 2025</div>
<div class="cell" style="left:346px;top:4px;color:#fff">100 transactions</div>
<div class="cell" style="left:634px;top:4px;color:#fff">50 KB</div>
<div class="abs" style="left:10.5px;top:29.5px;width:729.5px;height:23px;border-radius:6px;background:#f4f4f4"></div>
<svg class="ic" style="left:22px;top:33.5px" width="12" height="15" viewBox="0 0 12 15"><path d="M1 2.6A1.8 1.8 0 0 1 2.8 0.8H6.6L11 5.2V12.4A1.8 1.8 0 0 1 9.2 14.2H2.8A1.8 1.8 0 0 1 1 12.4Z" fill="none" stroke="#242424" stroke-width="1.3" stroke-linejoin="round"/><path d="M6.6 0.8V3.8A1.4 1.4 0 0 0 8 5.2H11" fill="none" stroke="#242424" stroke-width="1.3" stroke-linejoin="round"/><path d="M3.4 8.4H8.4M3.4 10.6H8.4" stroke="#242424" stroke-width="1.2"/></svg>
<div class="cell" style="left:57px;top:28px;color:#242424">August 31, 2025</div>
<div class="cell" style="left:346px;top:28px;color:#242424">100 transactions</div>
<div class="cell" style="left:634px;top:28px;color:#242424">50 KB</div>
<svg class="ic" style="left:22px;top:57.5px" width="12" height="15" viewBox="0 0 12 15"><path d="M1 2.6A1.8 1.8 0 0 1 2.8 0.8H6.6L11 5.2V12.4A1.8 1.8 0 0 1 9.2 14.2H2.8A1.8 1.8 0 0 1 1 12.4Z" fill="none" stroke="#242424" stroke-width="1.3" stroke-linejoin="round"/><path d="M6.6 0.8V3.8A1.4 1.4 0 0 0 8 5.2H11" fill="none" stroke="#242424" stroke-width="1.3" stroke-linejoin="round"/><path d="M3.4 8.4H8.4M3.4 10.6H8.4" stroke="#242424" stroke-width="1.2"/></svg>
<div class="cell" style="left:57px;top:52px;color:#242424">August 31, 2025</div>
<div class="cell" style="left:346px;top:52px;color:#242424">100 transactions</div>
<div class="cell" style="left:634px;top:52px;color:#242424">50 KB</div>
<div class="abs" style="left:10.5px;top:77.5px;width:729.5px;height:23px;border-radius:6px;background:#f4f4f4"></div>
<svg class="ic" style="left:22px;top:81.5px" width="12" height="15" viewBox="0 0 12 15"><path d="M1 2.6A1.8 1.8 0 0 1 2.8 0.8H6.6L11 5.2V12.4A1.8 1.8 0 0 1 9.2 14.2H2.8A1.8 1.8 0 0 1 1 12.4Z" fill="none" stroke="#242424" stroke-width="1.3" stroke-linejoin="round"/><path d="M6.6 0.8V3.8A1.4 1.4 0 0 0 8 5.2H11" fill="none" stroke="#242424" stroke-width="1.3" stroke-linejoin="round"/><path d="M3.4 8.4H8.4M3.4 10.6H8.4" stroke="#242424" stroke-width="1.2"/></svg>
<div class="cell" style="left:57px;top:76px;color:#242424">August 31, 2025</div>
<div class="cell" style="left:346px;top:76px;color:#242424">100 transactions</div>
<div class="cell" style="left:634px;top:76px;color:#242424">50 KB</div>
<svg class="ic" style="left:22px;top:105.5px" width="12" height="15" viewBox="0 0 12 15"><path d="M1 2.6A1.8 1.8 0 0 1 2.8 0.8H6.6L11 5.2V12.4A1.8 1.8 0 0 1 9.2 14.2H2.8A1.8 1.8 0 0 1 1 12.4Z" fill="none" stroke="#242424" stroke-width="1.3" stroke-linejoin="round"/><path d="M6.6 0.8V3.8A1.4 1.4 0 0 0 8 5.2H11" fill="none" stroke="#242424" stroke-width="1.3" stroke-linejoin="round"/><path d="M3.4 8.4H8.4M3.4 10.6H8.4" stroke="#242424" stroke-width="1.2"/></svg>
<div class="cell" style="left:57px;top:100px;color:#242424">August 31, 2025</div>
<div class="cell" style="left:346px;top:100px;color:#242424">100 transactions</div>
<div class="cell" style="left:634px;top:100px;color:#242424">50 KB</div>
<div class="abs" style="left:10.5px;top:125.5px;width:729.5px;height:23px;border-radius:6px;background:#f4f4f4"></div>
<svg class="ic" style="left:22px;top:129.5px" width="12" height="15" viewBox="0 0 12 15"><path d="M1 2.6A1.8 1.8 0 0 1 2.8 0.8H6.6L11 5.2V12.4A1.8 1.8 0 0 1 9.2 14.2H2.8A1.8 1.8 0 0 1 1 12.4Z" fill="none" stroke="#242424" stroke-width="1.3" stroke-linejoin="round"/><path d="M6.6 0.8V3.8A1.4 1.4 0 0 0 8 5.2H11" fill="none" stroke="#242424" stroke-width="1.3" stroke-linejoin="round"/><path d="M3.4 8.4H8.4M3.4 10.6H8.4" stroke="#242424" stroke-width="1.2"/></svg>
<div class="cell" style="left:57px;top:124px;color:#242424">August 30, 2025</div>
<div class="cell" style="left:346px;top:124px;color:#242424">0 transactions</div>
<div class="cell" style="left:634px;top:124px;color:#242424">16 KB</div>
<svg class="ic" style="left:22px;top:153.5px" width="12" height="15" viewBox="0 0 12 15"><path d="M1 2.6A1.8 1.8 0 0 1 2.8 0.8H6.6L11 5.2V12.4A1.8 1.8 0 0 1 9.2 14.2H2.8A1.8 1.8 0 0 1 1 12.4Z" fill="none" stroke="#242424" stroke-width="1.3" stroke-linejoin="round"/><path d="M6.6 0.8V3.8A1.4 1.4 0 0 0 8 5.2H11" fill="none" stroke="#242424" stroke-width="1.3" stroke-linejoin="round"/><path d="M3.4 8.4H8.4M3.4 10.6H8.4" stroke="#242424" stroke-width="1.2"/></svg>
<div class="cell" style="left:57px;top:148px;color:#242424">August 30, 2025</div>
<div class="cell" style="left:346px;top:148px;color:#242424">0 transactions</div>
<div class="cell" style="left:634px;top:148px;color:#242424">16 KB</div>
<div class="abs" style="left:10.5px;top:173.5px;width:729.5px;height:23px;border-radius:6px;background:#f4f4f4"></div>
<svg class="ic" style="left:22px;top:177.5px" width="12" height="15" viewBox="0 0 12 15"><path d="M1 2.6A1.8 1.8 0 0 1 2.8 0.8H6.6L11 5.2V12.4A1.8 1.8 0 0 1 9.2 14.2H2.8A1.8 1.8 0 0 1 1 12.4Z" fill="none" stroke="#242424" stroke-width="1.3" stroke-linejoin="round"/><path d="M6.6 0.8V3.8A1.4 1.4 0 0 0 8 5.2H11" fill="none" stroke="#242424" stroke-width="1.3" stroke-linejoin="round"/><path d="M3.4 8.4H8.4M3.4 10.6H8.4" stroke="#242424" stroke-width="1.2"/></svg>
<div class="cell" style="left:57px;top:172px;color:#242424">August 30, 2025</div>
<div class="cell" style="left:346px;top:172px;color:#242424">0 transactions</div>
<div class="cell" style="left:634px;top:172px;color:#242424">16 KB</div>
<svg class="ic" style="left:22px;top:201.5px" width="12" height="15" viewBox="0 0 12 15"><path d="M1 2.6A1.8 1.8 0 0 1 2.8 0.8H6.6L11 5.2V12.4A1.8 1.8 0 0 1 9.2 14.2H2.8A1.8 1.8 0 0 1 1 12.4Z" fill="none" stroke="#242424" stroke-width="1.3" stroke-linejoin="round"/><path d="M6.6 0.8V3.8A1.4 1.4 0 0 0 8 5.2H11" fill="none" stroke="#242424" stroke-width="1.3" stroke-linejoin="round"/><path d="M3.4 8.4H8.4M3.4 10.6H8.4" stroke="#242424" stroke-width="1.2"/></svg>
<div class="cell" style="left:57px;top:196px;color:#242424">August 30, 2025</div>
<div class="cell" style="left:346px;top:196px;color:#242424">0 transactions</div>
<div class="cell" style="left:634px;top:196px;color:#242424">16 KB</div>
<div class="abs" style="left:10.5px;top:221.5px;width:729.5px;height:23px;border-radius:6px;background:#f4f4f4"></div>
<svg class="ic" style="left:22px;top:225.5px" width="12" height="15" viewBox="0 0 12 15"><path d="M1 2.6A1.8 1.8 0 0 1 2.8 0.8H6.6L11 5.2V12.4A1.8 1.8 0 0 1 9.2 14.2H2.8A1.8 1.8 0 0 1 1 12.4Z" fill="none" stroke="#242424" stroke-width="1.3" stroke-linejoin="round"/><path d="M6.6 0.8V3.8A1.4 1.4 0 0 0 8 5.2H11" fill="none" stroke="#242424" stroke-width="1.3" stroke-linejoin="round"/><path d="M3.4 8.4H8.4M3.4 10.6H8.4" stroke="#242424" stroke-width="1.2"/></svg>
<div class="cell" style="left:57px;top:220px;color:#242424">August 30, 2025</div>
<div class="cell" style="left:346px;top:220px;color:#242424">0 transactions</div>
<div class="cell" style="left:634px;top:220px;color:#242424">16 KB</div>
<svg class="ic" style="left:22px;top:249.5px" width="12" height="15" viewBox="0 0 12 15"><path d="M1 2.6A1.8 1.8 0 0 1 2.8 0.8H6.6L11 5.2V12.4A1.8 1.8 0 0 1 9.2 14.2H2.8A1.8 1.8 0 0 1 1 12.4Z" fill="none" stroke="#242424" stroke-width="1.3" stroke-linejoin="round"/><path d="M6.6 0.8V3.8A1.4 1.4 0 0 0 8 5.2H11" fill="none" stroke="#242424" stroke-width="1.3" stroke-linejoin="round"/><path d="M3.4 8.4H8.4M3.4 10.6H8.4" stroke="#242424" stroke-width="1.2"/></svg>
<div class="cell" style="left:57px;top:244px;color:#242424">August 30, 2025</div>
<div class="cell" style="left:346px;top:244px;color:#242424">0 transactions</div>
<div class="cell" style="left:634px;top:244px;color:#242424">16 KB</div>
<div class="abs" style="left:10.5px;top:269.5px;width:729.5px;height:23px;border-radius:6px;background:#f4f4f4"></div>
<svg class="ic" style="left:22px;top:273.5px" width="12" height="15" viewBox="0 0 12 15"><path d="M1 2.6A1.8 1.8 0 0 1 2.8 0.8H6.6L11 5.2V12.4A1.8 1.8 0 0 1 9.2 14.2H2.8A1.8 1.8 0 0 1 1 12.4Z" fill="none" stroke="#242424" stroke-width="1.3" stroke-linejoin="round"/><path d="M6.6 0.8V3.8A1.4 1.4 0 0 0 8 5.2H11" fill="none" stroke="#242424" stroke-width="1.3" stroke-linejoin="round"/><path d="M3.4 8.4H8.4M3.4 10.6H8.4" stroke="#242424" stroke-width="1.2"/></svg>
<div class="cell" style="left:57px;top:268px;color:#242424">August 29, 2025</div>
<div class="cell" style="left:346px;top:268px;color:#242424">8 transactions</div>
<div class="cell" style="left:634px;top:268px;color:#242424">18 KB</div>
<svg class="ic" style="left:22px;top:297.5px" width="12" height="15" viewBox="0 0 12 15"><path d="M1 2.6A1.8 1.8 0 0 1 2.8 0.8H6.6L11 5.2V12.4A1.8 1.8 0 0 1 9.2 14.2H2.8A1.8 1.8 0 0 1 1 12.4Z" fill="none" stroke="#242424" stroke-width="1.3" stroke-linejoin="round"/><path d="M6.6 0.8V3.8A1.4 1.4 0 0 0 8 5.2H11" fill="none" stroke="#242424" stroke-width="1.3" stroke-linejoin="round"/><path d="M3.4 8.4H8.4M3.4 10.6H8.4" stroke="#242424" stroke-width="1.2"/></svg>
<div class="cell" style="left:57px;top:292px;color:#242424">August 29, 2025</div>
<div class="cell" style="left:346px;top:292px;color:#242424">8 transactions</div>
<div class="cell" style="left:634px;top:292px;color:#242424">18 KB</div>
</div>
<div class="abs" style="left:0;top:412px;width:750px;height:1px;background:#e6e6e6"></div>
<svg class="ic" style="left:14.5px;top:424.20000000000005px" width="12" height="12" viewBox="0 0 12 12"><path d="M6 0.8V11.2M0.8 6H11.2" stroke="#777" stroke-width="1.2" stroke-linecap="round"/></svg>
<svg class="ic" style="left:46.5px;top:424.20000000000005px" width="12" height="12" viewBox="0 0 12 12"><path d="M0.8 6H11.2" stroke="#777" stroke-width="1.2" stroke-linecap="round"/></svg>
<div class="t" style="left:0;width:750px;text-align:center;top:421px;font-size:13.6px;color:#7c7c7c;padding-left:0px">1 of 58 selected</div>
<svg class="ic" style="left:723px;top:423px" width="14" height="15" viewBox="0 0 14 15"><path d="M4.2 4.4H3.4A2 2 0 0 0 1.4 6.4V12A2 2 0 0 0 3.4 14H10.6A2 2 0 0 0 12.6 12V6.4A2 2 0 0 0 10.6 4.4H9.8" fill="none" stroke="#8a8a8a" stroke-width="1.1"/><path d="M7 1.2V9.4M4.8 7.4L7 9.5L9.2 7.4" fill="none" stroke="#8a8a8a" stroke-width="1.1" stroke-linecap="round" stroke-linejoin="round"/></svg>
</div>
<div id="menu" style="position:absolute;left:432px;top:329px;width:147px;height:128px;background:#f8f8fb;border-radius:11px;box-shadow:0 6px 18px rgba(0,0,0,0.18),0 0 0 0.5px rgba(0,0,0,0.12)">
<div class="abs" style="left:8px;top:8px;width:131px;height:18px;border-radius:6px;background:#ecebf8;filter:blur(2px)"></div>
<svg class="ic" style="left:17px;top:11px" width="12" height="12" viewBox="0 0 12 12"><path d="M6 1.8V10.2M1.8 6H10.2" stroke="#1e1e1e" stroke-width="1.2" stroke-linecap="round"/></svg>
<svg class="ic" style="left:16px;top:46px" width="12" height="12" viewBox="0 0 12 12"><circle cx="6" cy="6.2" r="4.9" fill="none" stroke="#1e1e1e" stroke-width="1.2"/><path d="M4.2 5.2A2 2 0 1 1 4.6 7.6" fill="none" stroke="#1e1e1e" stroke-width="1.1"/><path d="M3.4 4.6L4.3 5.8L5.4 4.9" fill="none" stroke="#1e1e1e" stroke-width="1"/></svg>
<svg class="ic" style="left:16px;top:70px" width="12" height="13" viewBox="0 0 12 13"><path d="M3.6 5H3A1.6 1.6 0 0 0 1.4 6.6V10.6A1.6 1.6 0 0 0 3 12.2H9A1.6 1.6 0 0 0 10.6 10.6V6.6A1.6 1.6 0 0 0 9 5H8.4" fill="none" stroke="#1e1e1e" stroke-width="1.2"/><path d="M6 8.4V1.2M4 3.2L6 1.2L8 3.2" fill="none" stroke="#1e1e1e" stroke-width="1.2" stroke-linecap="round" stroke-linejoin="round"/></svg>
<svg class="ic" style="left:16px;top:104.5px" width="12" height="13" viewBox="0 0 12 13"><path d="M4.4 2.6V2A1 1 0 0 1 5.4 1H6.6A1 1 0 0 1 7.6 2V2.6" fill="none" stroke="#1e1e1e" stroke-width="1.1"/><path d="M1.6 3H10.4" stroke="#1e1e1e" stroke-width="1.2" stroke-linecap="round"/><path d="M2.6 3.4H9.4L8.8 11.2A1.2 1.2 0 0 1 7.6 12.2H4.4A1.2 1.2 0 0 1 3.2 11.2Z" fill="none" stroke="#1e1e1e" stroke-width="1.2"/><path d="M4.9 5.2V10.2M7.1 5.2V10.2" stroke="#1e1e1e" stroke-width="1"/></svg>
<div class="t" style="left:35.5px;top:7px;font-size:13.4px;color:#1e1e1e;padding-top:1px">Create Backup</div>
<div class="t" style="left:35.5px;top:42px;font-size:13.4px;color:#1e1e1e;padding-top:1px">Restore Backup</div>
<div class="t" style="left:35.5px;top:66px;font-size:13.4px;color:#1e1e1e;padding-top:1px">Export Backup</div>
<div class="t" style="left:35.5px;top:101px;font-size:13.4px;color:#1e1e1e;padding-top:1px">Delete Backup</div>
<div class="abs" style="left:16px;top:34px;width:115px;height:1px;background:#dedee2"></div>
<div class="abs" style="left:16px;top:93.5px;width:115px;height:1px;background:#dedee2"></div>
</div>
</body></html>
